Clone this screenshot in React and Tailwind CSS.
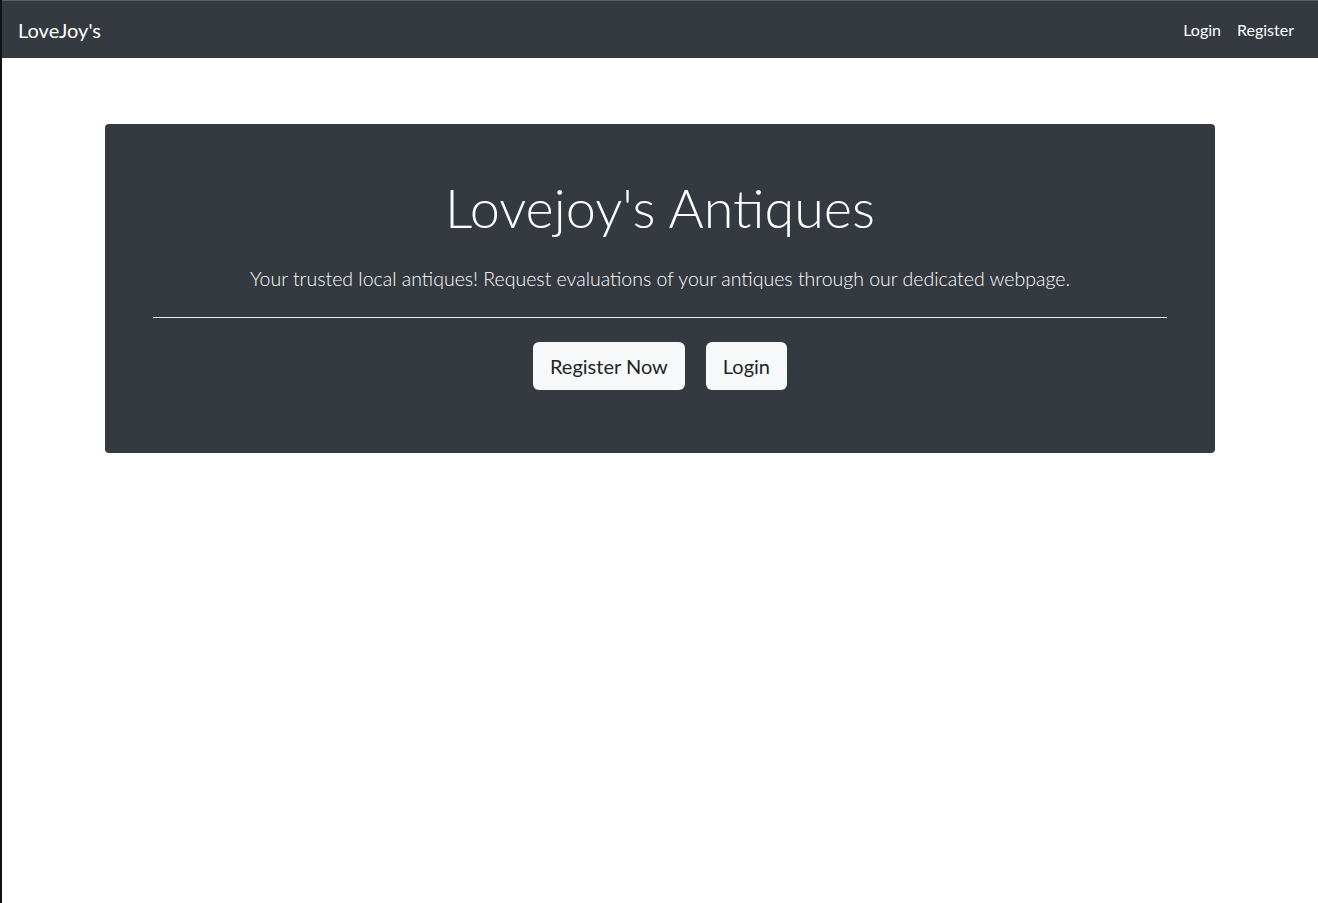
import React from "react";

const font = { fontFamily: "Lato, 'Open Sans', sans-serif" };

const Navbar = () => (
  <nav className="flex h-[58px] items-center justify-between border-t border-[#5a5e63] bg-[#343a40] pl-4 pr-4">
    <a href="#" className="text-[20px] text-white">
      LoveJoy's
    </a>
    <div className="flex items-center text-[16px] text-white">
      <a href="#" className="px-2">Login</a>
      <a href="#" className="px-2">Register</a>
    </div>
  </nav>
);

export default function App() {
  return (
    <div className="min-h-[903px] border-l-2 border-[#111214] bg-white" style={font}>
      <Navbar />

      {/* Jumbotron */}
      <main className="mx-auto w-[1110px] pt-[66px]">
        <section className="rounded bg-[#343a40] px-12 pb-[63px] pt-[52px] text-center text-white">
          <h1 className="mb-[23px] text-[54px] font-light leading-[1.2]">Lovejoy's Antiques</h1>
          <p className="text-[19.5px] font-light leading-[30px]">
            Your trusted local antiques! Request evaluations of your antiques through our dedicated webpage.
          </p>
          <hr className="mb-6 mt-[23px] border-t border-[#e9ecef]" />
          <div className="flex justify-center gap-[21px]">
            <a href="#" className="rounded-md bg-[#f8f9fa] px-[17px] py-2 text-[20px] leading-[32px] text-[#212529]">
              Register Now
            </a>
            <a href="#" className="rounded-md bg-[#f8f9fa] px-[17px] py-2 text-[20px] leading-[32px] text-[#212529]">
              Login
            </a>
          </div>
        </section>
      </main>
    </div>
  );
}
